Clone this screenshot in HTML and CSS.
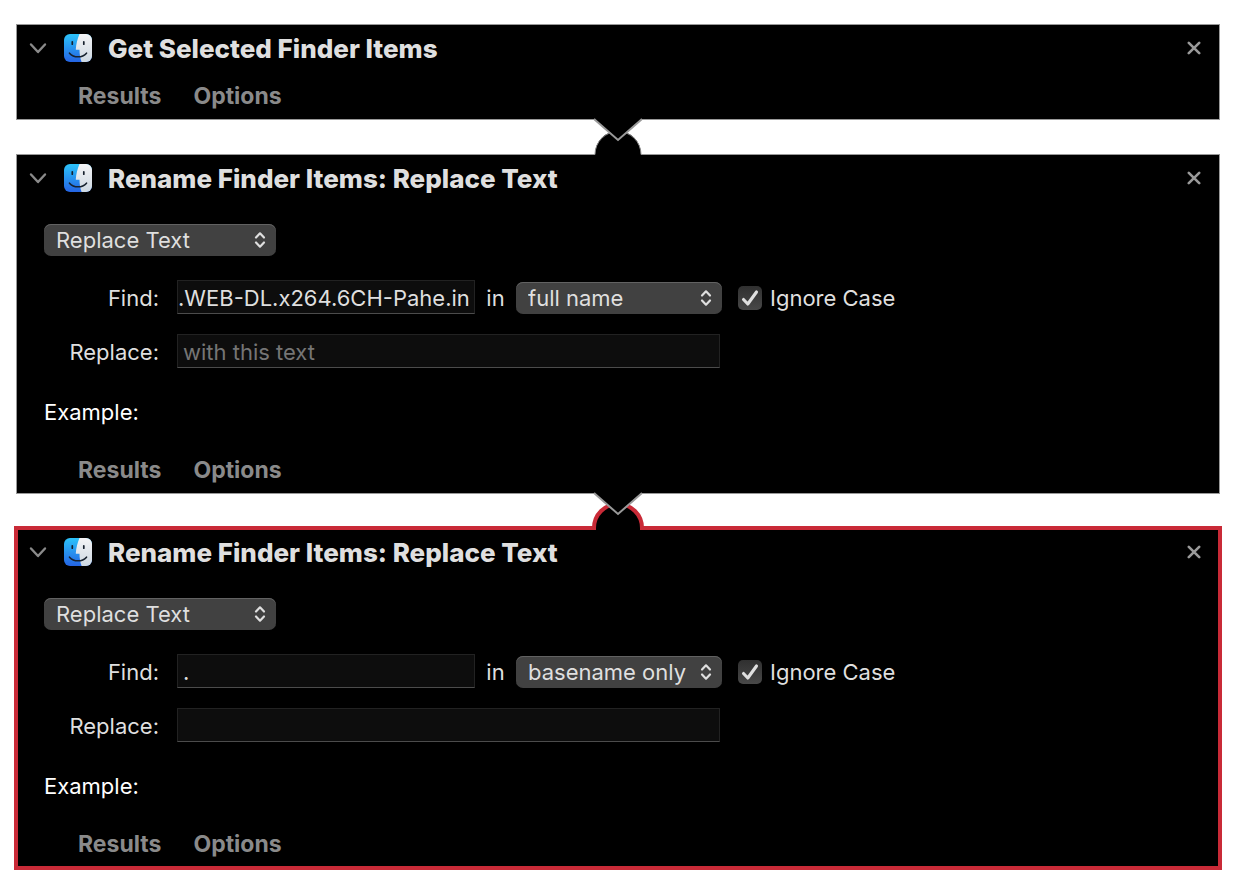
FILE: index.html
```html
<!DOCTYPE html>
<html lang="en">
<head>
<meta charset="utf-8">
<title>Workflow</title>
<link rel="stylesheet" href="styles.css">
</head>
<body>
<svg class="defs" aria-hidden="true">
  <defs>
    <linearGradient id="face-blue" x1="0" y1="0" x2="0" y2="1"><stop offset="0" stop-color="#2cc3fa"/><stop offset="1" stop-color="#2464e4"/></linearGradient>
    <linearGradient id="face-white" x1="0" y1="0" x2="0" y2="1"><stop offset="0" stop-color="#f4f4f6"/><stop offset="1" stop-color="#cdd8e2"/></linearGradient>
    <clipPath id="face-clip"><rect width="28" height="28" rx="6"/></clipPath>
    <symbol id="finder" viewBox="0 0 28 28">
      <g clip-path="url(#face-clip)">
        <rect width="28" height="28" fill="url(#face-blue)"/>
        <path d="M15.5 0C13.4 5 12.2 10 11.8 15.2Q11.8 15.8 12.4 15.8H15.5C15.5 20 16.2 24.500 17.600 28H28V0Z" fill="url(#face-white)"/>
      </g>
      <path d="M8.300 7.800V10.200M19.800 7.800V10.200" stroke="#17212e" stroke-width="1.700" stroke-linecap="round"/>
      <path d="M5.500 19.200C9.800 24 18.200 24 22.500 19.200" fill="none" stroke="#17212e" stroke-width="1.600" stroke-linecap="round"/>
    </symbol>
    <symbol id="chevron" viewBox="0 0 18 12"><path d="M2 2.500L9 10L16 2.500" fill="none" stroke="currentColor" stroke-width="2.400" stroke-linecap="round" stroke-linejoin="round"/></symbol>
    <symbol id="close" viewBox="0 0 14 14"><path d="M1.800 1.800L12.200 12.200M12.200 1.800L1.800 12.200" stroke="currentColor" stroke-width="2.600" stroke-linecap="round"/></symbol>
    <symbol id="updown" viewBox="0 0 12 18"><path d="M2 6.500L6 2.300L10 6.500M2 11.500L6 15.700L10 11.500" fill="none" stroke="currentColor" stroke-width="2.200" stroke-linecap="round" stroke-linejoin="round"/></symbol>
    <symbol id="tick" viewBox="0 0 24 24"><path d="M5.500 13.500L9.800 18L18.500 6" fill="none" stroke="currentColor" stroke-width="3.100" stroke-linecap="round" stroke-linejoin="round"/></symbol>
  </defs>
</svg>

<main class="workflow">
  <section class="action">
    <header class="action-head">
      <button class="icon-button" aria-label="Collapse"><svg class="chevron"><use href="#chevron"/></svg></button>
      <svg class="finder"><use href="#finder"/></svg>
      <h2 class="title">Get Selected Finder Items</h2>
      <button class="icon-button close" aria-label="Remove"><svg class="cross"><use href="#close"/></svg></button>
    </header>
    <footer class="action-foot"><button class="tab">Results</button><button class="tab">Options</button></footer>
  </section>

  <div class="link">
    <svg class="link-shape" viewBox="0 0 60 42" aria-hidden="true">
      <path d="M7 42V38A23 23 0 0 1 53 38V42Z" fill="#000"/>
      <path d="M7 38.500A23 23 0 0 1 53 38.500" fill="none" stroke="#8c8c8c"/>
      <path d="M6 0V3L30 24L54 3V0Z" fill="#000"/>
      <path d="M6 3L30 24L54 3" fill="none" stroke="#999" stroke-width="2"/>
    </svg>
  </div>

  <section class="action">
    <header class="action-head">
      <button class="icon-button" aria-label="Collapse"><svg class="chevron"><use href="#chevron"/></svg></button>
      <svg class="finder"><use href="#finder"/></svg>
      <h2 class="title">Rename Finder Items: Replace Text</h2>
      <button class="icon-button close" aria-label="Remove"><svg class="cross"><use href="#close"/></svg></button>
    </header>
    <div class="action-body">
      <div class="popup popup-mode">
        <select class="popup-select" aria-label="Operation"><option>Replace Text</option></select>
        <svg class="popup-arrows"><use href="#updown"/></svg>
      </div>
      <div class="field-row find-row">
        <label class="field-label" for="find-1">Find:</label>
        <input class="field field-find field-scrolled" id="find-1" type="text" value=".WEB-DL.x264.6CH-Pahe.in">
        <label class="in-label" for="scope-1">in</label>
        <div class="popup popup-scope">
          <select class="popup-select" id="scope-1"><option>full name</option></select>
          <svg class="popup-arrows"><use href="#updown"/></svg>
        </div>
        <label class="check"><span class="check-box"><input class="check-input" type="checkbox" checked><svg class="check-tick"><use href="#tick"/></svg></span>Ignore Case</label>
      </div>
      <div class="field-row replace-row">
        <label class="field-label" for="replace-1">Replace:</label>
        <input class="field field-replace" id="replace-1" type="text" placeholder="with this text">
      </div>
      <p class="example">Example:</p>
    </div>
    <footer class="action-foot"><button class="tab">Results</button><button class="tab">Options</button></footer>
  </section>

  <div class="link">
    <svg class="link-shape" viewBox="0 0 60 42" aria-hidden="true">
      <path d="M6 42V38A24 24 0 0 1 54 38V42Z" fill="#000"/>
      <path d="M6 40V38A24 24 0 0 1 54 38V40" fill="none" stroke="#c92a37" stroke-width="4"/>
      <path d="M6 0V3L30 24L54 3V0Z" fill="#000"/>
      <path d="M6 3L30 24L54 3" fill="none" stroke="#999" stroke-width="2"/>
    </svg>
  </div>

  <section class="action action-selected">
    <header class="action-head">
      <button class="icon-button" aria-label="Collapse"><svg class="chevron"><use href="#chevron"/></svg></button>
      <svg class="finder"><use href="#finder"/></svg>
      <h2 class="title">Rename Finder Items: Replace Text</h2>
      <button class="icon-button close" aria-label="Remove"><svg class="cross"><use href="#close"/></svg></button>
    </header>
    <div class="action-body">
      <div class="popup popup-mode">
        <select class="popup-select" aria-label="Operation"><option>Replace Text</option></select>
        <svg class="popup-arrows"><use href="#updown"/></svg>
      </div>
      <div class="field-row find-row">
        <label class="field-label" for="find-2">Find:</label>
        <input class="field field-find" id="find-2" type="text" value=".">
        <label class="in-label" for="scope-2">in</label>
        <div class="popup popup-scope">
          <select class="popup-select" id="scope-2"><option>basename only</option></select>
          <svg class="popup-arrows"><use href="#updown"/></svg>
        </div>
        <label class="check"><span class="check-box"><input class="check-input" type="checkbox" checked><svg class="check-tick"><use href="#tick"/></svg></span>Ignore Case</label>
      </div>
      <div class="field-row replace-row">
        <label class="field-label" for="replace-2">Replace:</label>
        <input class="field field-replace" id="replace-2" type="text">
      </div>
      <p class="example">Example:</p>
    </div>
    <footer class="action-foot"><button class="tab">Results</button><button class="tab">Options</button></footer>
  </section>
</main>
</body>
</html>
```

FILE: styles.css
```css
* { box-sizing: border-box; }

body {
  margin: 0;
  background: #fff;
  color: #dfdfdf;
  font: 420 22px/28px Inter, "Liberation Sans", sans-serif;
  font-optical-sizing: none;
}

button, input, select { font: inherit; font-optical-sizing: none; color: inherit; }
button { border: 0; padding: 0; background: none; }
svg { display: block; flex: none; }
.defs { position: absolute; width: 0; height: 0; }

.workflow { padding: 24px 16px; }

.action { border: 1px solid #999; background: #000; }
.action-selected {
  border-color: #c92a37;
  box-shadow: 0 0 0 2px #c92a37, inset 0 0 0 1px #c92a37;
}

.link { position: relative; z-index: 1; height: 34px; }
.link-shape {
  position: absolute;
  top: -4px;
  left: calc(50% - 30px);
  width: 60px;
  height: 42px;
}

.action-head {
  display: flex;
  align-items: center;
  height: 46px;
  padding: 0 18px 0 12px;
}
.icon-button { color: #999; }
.chevron { width: 18px; height: 12px; color: #8a8a8a; }
.finder { width: 28px; height: 28px; margin: 0 16px 0 17px; }
.title { margin: 0; padding-top: 2px; font-size: 26px; font-weight: 800; line-height: 32px; }
.close { margin-left: auto; }
.cross { width: 14px; height: 14px; }

.action-foot { display: flex; gap: 32px; height: 48px; padding-left: 61px; }
.tab { padding-top: 2px; font-size: 23px; font-weight: 700; color: #8a8a8a; }

.action-body { padding: 23px 27px 19px; }

.popup { position: relative; height: 32px; }
.popup-mode { width: 232px; }
.popup-scope { width: 206px; }
.popup-select {
  appearance: none;
  width: 100%;
  height: 100%;
  padding: 0 24px 0 12px;
  border: 0;
  border-radius: 7px;
  background: #414141;
  box-shadow: inset 0 1px 0 #626262;
}
.popup-arrows {
  position: absolute;
  top: 7px;
  right: 10px;
  width: 12px;
  height: 18px;
  pointer-events: none;
}

.field-row { display: flex; align-items: center; height: 36px; }
.find-row { margin-top: 24px; }
.replace-row { margin-top: 18px; }
.field-label { width: 115px; margin-right: 18px; text-align: right; }
.field {
  align-self: flex-start;
  height: 34px;
  padding: 2px 5px 0;
  border: 1px solid #222;
  border-bottom-color: #4c4c4c;
  background: #0d0d0d;
  outline: 0;
}
.field::placeholder { color: #757575; opacity: 1; }
.field-find { width: 298px; }
.field-scrolled { padding: 2px 0 0; }
.field-replace { width: 543px; }
.in-label { width: 41px; text-align: center; }

.check { display: flex; align-items: center; gap: 8px; margin-left: 16px; }
.check-box { position: relative; width: 24px; height: 24px; }
.check-input {
  display: block;
  appearance: none;
  width: 24px;
  height: 24px;
  margin: 0;
  border-radius: 5px;
  background: linear-gradient(#303030, #484848);
}
.check-tick { position: absolute; top: 0; left: 0; width: 24px; height: 24px; pointer-events: none; }

.example { margin: 28px 0 0; color: #fff; }
```
